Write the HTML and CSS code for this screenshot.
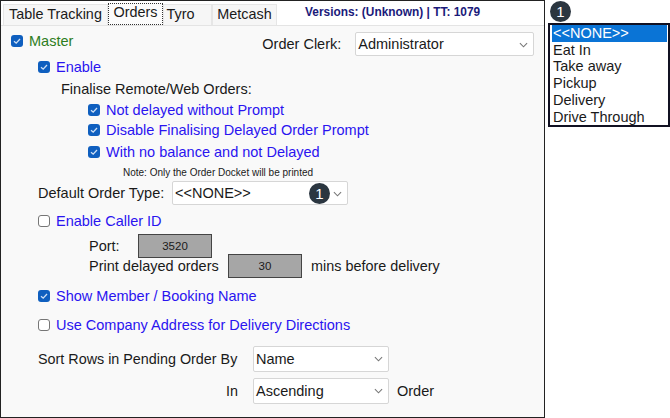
FILE: index.html
```html
<!DOCTYPE html>
<html lang="en">
<head>
    <meta charset="UTF-8">
    <title>Orders Settings</title>
    <link rel="stylesheet" href="styles.css">
</head>
<body>
    <div class="window">
        <div class="tab-bar">
            <div class="tab tab-first">Table Tracking</div>
            <div class="tab tab-active">Orders</div>
            <div class="tab tab-tyro">Tyro</div>
            <div class="tab tab-metcash">Metcash</div>
            <div class="versions">Versions: (Unknown) | TT: 1079</div>
        </div>
        <div class="content">
            <div class="row row-master">
                <span class="check on"><svg viewBox="0 0 12 12"><path d="M3 6.2 5.2 8.2 9 4"/></svg></span>
                <span class="green">Master</span>
                <span class="clerk-label">Order Clerk:</span>
                <div class="select select-clerk">Administrator<svg class="chev" viewBox="0 0 10 6"><path d="M1 1 5 5 9 1"/></svg></div>
            </div>
            <div class="row row-enable indent-1">
                <span class="check on"><svg viewBox="0 0 12 12"><path d="M3 6.2 5.2 8.2 9 4"/></svg></span>
                <span class="blue">Enable</span>
            </div>
            <div class="row row-finalise">Finalise Remote/Web Orders:</div>
            <div class="row row-opt indent-2">
                <span class="check on"><svg viewBox="0 0 12 12"><path d="M3 6.2 5.2 8.2 9 4"/></svg></span>
                <span class="blue">Not delayed without Prompt</span>
            </div>
            <div class="row row-opt-next indent-2">
                <span class="check on"><svg viewBox="0 0 12 12"><path d="M3 6.2 5.2 8.2 9 4"/></svg></span>
                <span class="blue">Disable Finalising Delayed Order Prompt</span>
            </div>
            <div class="row row-opt indent-2">
                <span class="check on"><svg viewBox="0 0 12 12"><path d="M3 6.2 5.2 8.2 9 4"/></svg></span>
                <span class="blue">With no balance and not Delayed</span>
            </div>
            <div class="row row-note">Note: Only the Order Docket will be printed</div>
            <div class="row row-default">
                <span class="default-label">Default Order Type:</span>
                <div class="select select-type">&lt;&lt;NONE&gt;&gt;<span class="badge badge-inline">1</span><svg class="chev" viewBox="0 0 10 6"><path d="M1 1 5 5 9 1"/></svg></div>
            </div>
            <div class="row row-caller indent-1">
                <span class="check"></span>
                <span class="blue">Enable Caller ID</span>
            </div>
            <div class="row row-port">
                <span class="port-label">Port:</span>
                <div class="num-box">3520</div>
            </div>
            <div class="row row-print">
                <span class="print-label">Print delayed orders</span>
                <div class="num-box">30</div>
                <span class="mins">mins before delivery</span>
            </div>
            <div class="row row-show indent-1">
                <span class="check on"><svg viewBox="0 0 12 12"><path d="M3 6.2 5.2 8.2 9 4"/></svg></span>
                <span class="blue">Show Member / Booking Name</span>
            </div>
            <div class="row row-address indent-1">
                <span class="check"></span>
                <span class="blue">Use Company Address for Delivery Directions</span>
            </div>
            <div class="row row-sort">
                <span class="sort-label">Sort Rows in Pending Order By</span>
                <div class="select select-sort">Name<svg class="chev" viewBox="0 0 10 6"><path d="M1 1 5 5 9 1"/></svg></div>
            </div>
            <div class="row row-in">
                <span class="sort-label in-label">In</span>
                <div class="select select-sort">Ascending<svg class="chev" viewBox="0 0 10 6"><path d="M1 1 5 5 9 1"/></svg></div>
                <span class="order-word">Order</span>
            </div>
        </div>
    </div>
    <div class="side">
        <span class="badge">1</span>
        <div class="list">
            <div class="list-item selected">&lt;&lt;NONE&gt;&gt;</div>
            <div class="list-item">Eat In</div>
            <div class="list-item">Take away</div>
            <div class="list-item">Pickup</div>
            <div class="list-item">Delivery</div>
            <div class="list-item">Drive Through</div>
        </div>
    </div>
</body>
</html>
```
FILE: styles.css
```css
* {
    margin: 0;
    padding: 0;
    box-sizing: border-box;
}

body {
    width: 670px;
    height: 418px;
    overflow: hidden;
    display: flex;
    background-color: #FFFFFF;
    color: #1A1A1A;
    font-family: "Liberation Sans", Arial, sans-serif;
    font-size: 14.5px;
}

.window {
    width: 545px;
    height: 418px;
    border: 1px solid #222222;
    background-color: #FFFFFF;
}

.tab-bar {
    height: 24px;
    padding: 2px 0 0 2px;
    display: flex;
    align-items: flex-start;
}

.tab {
    height: 21px;
    margin-top: 1px;
    background-color: #F6F6F6;
    border: 1px solid #E6E6E6;
    border-bottom: none;
    line-height: 19px;
    font-size: 14.4px;
    text-align: center;
}

.tab-first {
    width: 105px;
}

.tab-active {
    width: 55px;
    height: 22px;
    margin-top: 0;
    background-color: #FBFBFB;
    border: 1px dotted #333333;
    line-height: 17px;
}

.tab-tyro {
    width: 49px;
    padding-right: 14px;
}

.tab-metcash {
    width: 65px;
}

.versions {
    margin-left: 28px;
    margin-top: 2px;
    font-size: 11.9px;
    font-weight: bold;
    color: #1A1A7A;
}

.content {
    height: 392px;
    background-color: #F9F9F9;
    border-top: 1px solid #E4E4E4;
    padding-top: 2px;
}

.row {
    display: flex;
    align-items: center;
}

.indent-1 {
    padding-left: 37px;
}

.indent-2 {
    padding-left: 87px;
}

.check {
    width: 12px;
    height: 12px;
    flex: none;
    margin-right: 6px;
    border: 1px solid #767676;
    border-radius: 3px;
    background-color: #FFFFFF;
}

.check.on {
    border: none;
    background-color: #0F5FBF;
}

.check svg {
    display: block;
    width: 12px;
    height: 12px;
}

.check svg path {
    fill: none;
    stroke: #CFE0F5;
    stroke-width: 1.3;
}

.blue {
    color: #2A14F0;
}

.green {
    color: #2E7D22;
}

.select {
    position: relative;
    height: 26px;
    background-color: #FFFFFF;
    border: 1px solid #D6D6D6;
    border-radius: 2px;
    line-height: 24px;
    padding-left: 2px;
}

.chev {
    position: absolute;
    right: 5px;
    top: 9px;
    width: 9px;
    height: 6px;
    fill: none;
    stroke: #777777;
    stroke-width: 1.2;
}

.row-master {
    height: 26px;
    padding-left: 10px;
}

.clerk-label {
    margin-left: 189px;
    margin-top: 5px;
}

.select-clerk {
    width: 179px;
    height: 24px;
    line-height: 22px;
    margin-left: 14px;
    margin-top: 5px;
}

.row-enable {
    height: 26px;
}

.row-finalise {
    height: 18px;
    padding-left: 60px;
}

.row-opt {
    height: 20px;
    margin-top: 2px;
}

.row-opt-next {
    height: 20px;
}

.row-note {
    height: 20px;
    padding-left: 122px;
    font-size: 10px;
}

.row-default {
    height: 24px;
    margin-top: -1px;
    padding-left: 37px;
}

.default-label {
    width: 134px;
}

.select-type {
    width: 176px;
    height: 24px;
    line-height: 22px;
}

.badge {
    display: block;
    width: 21px;
    height: 21px;
    border-radius: 50%;
    background-color: #2B3640;
    color: #FFFFFF;
    font-size: 15px;
    line-height: 21px;
    text-align: center;
}

.badge-inline {
    position: absolute;
    right: 17px;
    top: 1px;
}

.row-caller {
    height: 26px;
    margin-top: 3px;
}

.port-label {
    width: 49px;
}

.num-box {
    height: 24px;
    background-color: #A6A6A6;
    border: 1px solid #444444;
    font-size: 11.5px;
    line-height: 22px;
    text-align: center;
}

.row-port {
    height: 24px;
    padding-left: 88px;
}

.row-port .num-box {
    width: 74px;
}

.row-print {
    height: 24px;
    margin-top: -4px;
    padding-left: 88px;
}

.print-label {
    width: 139px;
}

.row-print .num-box {
    width: 74px;
}

.mins {
    margin-left: 9px;
    font-size: 14.4px;
}

.row-show {
    height: 22px;
    margin-top: 7px;
}

.row-address {
    height: 22px;
    margin-top: 7px;
}

.row-sort {
    height: 26px;
    margin-top: 10px;
    padding-left: 37px;
}

.sort-label {
    width: 215px;
    font-size: 14.35px;
}

.in-label {
    text-align: right;
    padding-right: 15px;
}

.select-sort {
    width: 136px;
}

.row-in {
    height: 26px;
    margin-top: 6px;
    padding-left: 37px;
}

.order-word {
    margin-left: 8px;
}

.side {
    padding: 1px 0 0 3px;
}

.side .badge {
    margin-left: 2px;
}

.list {
    width: 122px;
    height: 104px;
    margin-top: 1px;
    border: 2px solid #111122;
    line-height: 16.7px;
    padding: 0 1px 0 2px;
}

.list-item {
    padding-left: 1px;
}

.selected {
    background-color: #0A74D6;
    color: #FFFFFF;
}
```
